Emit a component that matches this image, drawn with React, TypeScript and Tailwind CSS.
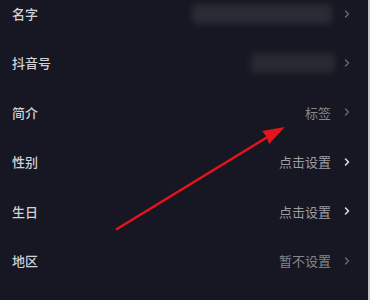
import { ChevronRight } from 'lucide-react'

type Row = {
  label: string
  value?: string
  blur?: 'long' | 'short'
  bright?: boolean
}

const rows: Row[] = [
  { label: '名字', blur: 'long' },
  { label: '抖音号', blur: 'short' },
  { label: '简介', value: '标签' },
  { label: '性别', value: '点击设置', bright: true },
  { label: '生日', value: '点击设置', bright: true },
  { label: '地区', value: '暂不设置' },
]

export default function App() {
  return (
    <div
      className="relative w-[370px] h-[300px] overflow-hidden bg-[#161722] flex"
      style={{ fontFamily: '"Noto Sans CJK SC", "Noto Sans", sans-serif' }}
    >
      <div className="flex-1 flex flex-col mt-[-11px]">
        {rows.map((r) => (
          <ProfileRow key={r.label} row={r} />
        ))}
      </div>
      <div className="w-[2px] h-full bg-[#c9c9cd]" />

      {/* red annotation arrow */}
      <svg className="absolute left-0 top-0" width="370" height="300" viewBox="0 0 370 300">
        <line x1="117" y1="229" x2="270" y2="135.5" stroke="#e5131b" strokeWidth="2.6" strokeLinecap="round" />
        <polygon points="285,127 269,144 266.5,136.5 262,131" fill="#e5131b" />
      </svg>
    </div>
  )
}

function ProfileRow({ row }: { row: Row }) {
  return (
    <div className="h-[49.4px] flex items-center pl-[12px] pr-[15px]">
      <span className="text-[13px] text-[#d2d2d6] font-medium">{row.label}</span>
      <div className="ml-auto flex items-center">
        {row.blur === 'long' && (
          <div className="w-[140px] h-[20px] rounded-[4px] bg-[#2a2b34] blur-[3px] mr-[9px]" />
        )}
        {row.blur === 'short' && (
          <div className="w-[84px] h-[20px] rounded-[4px] bg-[#282932] blur-[3px] mr-[6px]" />
        )}
        {row.value && (
          <span className={`text-[13px] mr-[10px] ${row.bright ? 'text-[#9c9da2]' : 'text-[#85868c]'}`}>
            {row.value}
          </span>
        )}
        <ChevronRight
          size={12}
          strokeWidth={row.bright ? 3 : 2.4}
          className={row.bright ? 'text-[#e2e2e4]' : 'text-[#6f7077]'}
        />
      </div>
    </div>
  )
}
